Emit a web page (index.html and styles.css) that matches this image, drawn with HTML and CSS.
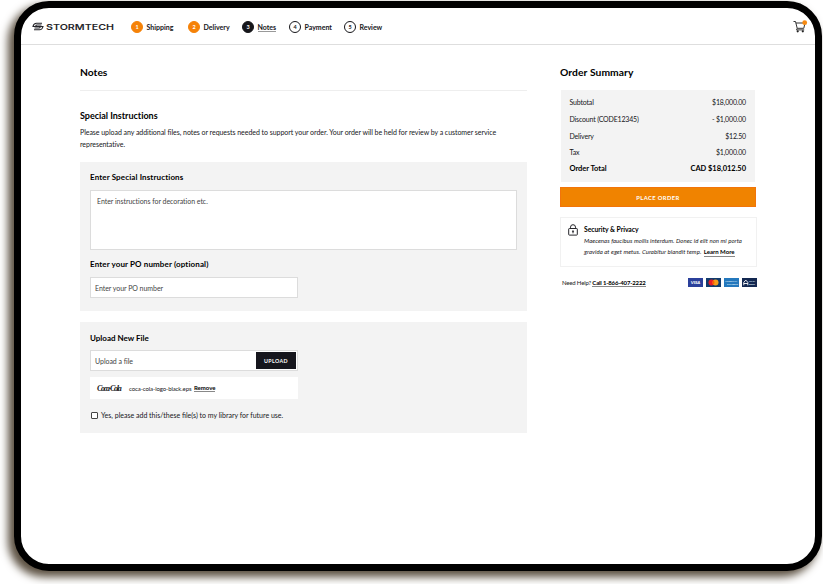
FILE: index.html
```
<!DOCTYPE html>
<html lang="en">
<head>
  <meta charset="UTF-8" />
  <meta name="viewport" content="width=device-width,initial-scale=1.0" />
  <title>Stormtech Checkout - Notes</title>
  <link rel="stylesheet" href="styles.css">
</head>
<body>

  <div class="device">

    <header class="header">
      <div class="logo">
        <svg width="12" height="9" viewBox="0 0 24 18" fill="none" stroke="#25252a" stroke-width="2.300">
          <path d="M20 2.500H9C5 2.500 3 4.500 2 9h12c3 0 3 3 0 3H5" />
          <path d="M4 15.500h11c4 0 6-2 7-6.500H10c-3 0-3-3 0-3h9" />
        </svg>
        <svg class="logo_text" width="69" height="10" viewBox="0 0 69 10">
          <text x="0" y="7.800" textLength="68" lengthAdjust="spacingAndGlyphs">STORMTECH</text>
        </svg>
      </div>

      <nav class="steps">
        <a class="step done"><span class="num">1</span><span class="name">Shipping</span></a>
        <a class="step done"><span class="num">2</span><span class="name">Delivery</span></a>
        <a class="step current"><span class="num">3</span><span class="name">Notes</span></a>
        <a class="step"><span class="num">4</span><span class="name">Payment</span></a>
        <a class="step"><span class="num">5</span><span class="name">Review</span></a>
      </nav>

      <svg class="cart" width="15" height="13" viewBox="0 0 15 13">
        <g fill="none" stroke="#333" stroke-width="1">
          <path d="M0.500 1.500h2l1.700 6.800h6.600l1.200-5.300H3" />
          <path d="M4.200 8.300l-.7 1.600h7.700" />
        </g>
        <circle cx="4.700" cy="11.300" r="1.100" fill="#222" />
        <circle cx="9.800" cy="11.300" r="1.100" fill="#222" />
        <circle cx="11.700" cy="2.700" r="2.400" fill="#f78a10" />
      </svg>
    </header>

    <main class="main">

      <section class="notes">
        <h1>Notes</h1>

        <h2>Special Instructions</h2>
        <p class="intro">Please upload any additional files, notes or requests needed to support your order. Your order will be held for review by a customer service<br>representative.</p>

        <div class="panel">
          <h3>Enter Special Instructions</h3>
          <div class="textarea">Enter instructions for decoration etc.</div>
          <h3 class="po_label">Enter your PO number (optional)</h3>
          <div class="field">Enter your PO number</div>
        </div>

        <div class="panel upload">
          <h3>Upload New File</h3>
          <div class="field">Upload a file<button>UPLOAD</button></div>
          <div class="file">
            <span class="cola">Coca&#8209;Cola</span>
            <span class="file_name">coca-cola-logo-black.eps</span>
            <a class="link">Remove</a>
          </div>
          <div class="library"><span class="checkbox"></span><span>Yes, please add this/these file(s) to my library for future use.</span></div>
        </div>
      </section>

      <aside class="order">
        <h1>Order Summary</h1>

        <div class="summary">
          <div class="row"><span>Subtotal</span><span>$18,000.00</span></div>
          <div class="row"><span>Discount (CODE12345)</span><span>- $1,000.00</span></div>
          <div class="row"><span>Delivery</span><span>$12.50</span></div>
          <div class="row"><span>Tax</span><span>$1,000.00</span></div>
          <div class="row total"><span>Order Total</span><span>CAD $18,012.50</span></div>
        </div>

        <button class="place">PLACE ORDER</button>

        <div class="security">
          <svg width="10" height="12" viewBox="0 0 10 12" fill="none" stroke="#25252a" stroke-width="1">
            <path d="M2.500 4.500V3.200a2.500 2.500 0 0 1 5 0v1.300" />
            <rect x="0.700" y="4.500" width="8.600" height="6.600" rx="0.600" />
            <path d="M5 7.500v1.800" />
            <circle cx="5" cy="7.200" r="0.500" fill="#25252a" />
          </svg>
          <div>
            <h4>Security &amp; Privacy</h4>
            <p>Maecenas faucibus mollis interdum. Donec id elit non mi porta<br>gravida at eget metus. Curabitur blandit temp. <a class="link">Learn More</a></p>
          </div>
        </div>

        <div class="help">
          <span class="help_text">Need Help? <a class="link">Call 1-866-407-2222</a></span>
          <span class="cards">
            <svg width="15" height="9" viewBox="0 0 15 9">
              <rect width="15" height="9" fill="#2b409b" />
              <text class="visa" x="7.500" y="6.200">VISA</text>
            </svg>
            <svg width="15" height="9" viewBox="0 0 15 9">
              <rect width="15" height="9" fill="#123b6d" />
              <circle cx="5.500" cy="4.500" r="3" fill="#eb1c26" />
              <circle cx="9.500" cy="4.500" r="3" fill="#f79e1b" />
              <path d="M7.500 2.260a3 3 0 0 1 0 4.480a3 3 0 0 1 0-4.480z" fill="#ff5f00" />
            </svg>
            <svg width="15" height="9" viewBox="0 0 15 9">
              <rect width="15" height="9" fill="#2478bd" />
              <text class="amex" x="1" y="4.300" textLength="12" lengthAdjust="spacingAndGlyphs">AMERICAN</text>
              <text class="amex" x="3" y="7.300" textLength="11" lengthAdjust="spacingAndGlyphs">EXPRESS</text>
            </svg>
            <svg width="15" height="9" viewBox="0 0 15 9">
              <rect width="15" height="9" fill="#122750" />
              <path d="M1.800 7.300v-3l2-2.200 2 2.200v3M1.800 5.500h4" fill="none" stroke="#fff" stroke-width="0.900" />
              <text class="amex" x="7" y="4.300" textLength="6" lengthAdjust="spacingAndGlyphs">Pay by</text>
              <text class="amex" x="7" y="7.200" textLength="6" lengthAdjust="spacingAndGlyphs">Bank</text>
            </svg>
          </span>
        </div>
      </aside>

    </main>
  </div>

</body>
</html>
```
FILE: styles.css
```
* {
  box-sizing: border-box;
}

body {
  margin: 0;
  height: 584px;
  padding: 1px 0 0 14px;
  overflow: hidden;
  background: #fff;
  color: #16161a;
  font-family: Lato, "Liberation Sans", sans-serif;
  font-size: 7px;
}

h1, h2, h3, h4, p {
  margin: 0;
}

h1, h2, h3, h4 {
  color: #000;
  font-weight: 700;
}

button {
  border: none;
  padding: 0;
  color: #fff;
  font-family: inherit;
  font-weight: 700;
}

.device {
  width: 808px;
  height: 570px;
  border: 7px solid #000;
  border-radius: 35px;
  background: #fff;
  box-shadow: -5px 5px 9px 1px #5c5142;
}

/* ========================== */
/* Header */
/* ========================== */

.header {
  display: flex;
  align-items: center;
  height: 37px;
  padding: 1px 7px 0 11px;
  border-bottom: 1px solid #dedede;
}

.logo {
  display: flex;
  align-items: center;
  gap: 2px;
  width: 99px;
}

.logo_text text {
  font-family: Inter, sans-serif;
  font-size: 7.8px;
  font-weight: 600;
  fill: #25252a;
}

.steps {
  display: grid;
  grid-template-columns: 57px 54px 47px 55px auto;
}

.step {
  display: flex;
  align-items: center;
  gap: 3.5px;
  font-weight: 700;
  line-height: 8px;
}

.num {
  width: 12px;
  height: 12px;
  border: 1px solid #16161a;
  border-radius: 50%;
  font-size: 5.5px;
  line-height: 10px;
  text-align: center;
}

.done .num {
  border-color: #f58208;
  background: #f58208;
  color: #fff;
}

.current .num {
  background: #16161a;
  color: #fff;
}

.current .name {
  box-shadow: 0 1px #999;
}

.cart {
  margin-left: auto;
}

/* ========================== */
/* Notes */
/* ========================== */

.main {
  display: flex;
  justify-content: space-between;
  padding: 18px 58px 0 59px;
}

.notes {
  width: 447px;
}

.notes h1, .order h1 {
  height: 27px;
  font-size: 10.3px;
  line-height: 18px;
}

.notes h1 {
  height: 28px;
  border-bottom: 1px solid #eee;
}

.order h1 {
  letter-spacing: 0.08px;
}

.notes h2 {
  margin-top: 19px;
  font-size: 9px;
  letter-spacing: -0.02px;
  line-height: 12px;
}

.intro {
  margin-top: 4px;
  letter-spacing: -0.043px;
  line-height: 12px;
  white-space: nowrap;
}

.panel {
  height: 149px;
  margin-top: 12px;
  padding: 9px 10px;
  background: #f3f3f3;
}

.panel h3 {
  font-size: 8px;
  letter-spacing: 0.12px;
  line-height: 12px;
}

.textarea {
  height: 60px;
  margin-top: 7px;
  padding: 4px 6px;
  border: 1px solid #dcdcdc;
  background: #fff;
  color: #444;
  letter-spacing: -0.04px;
  line-height: 12px;
}

.panel .po_label {
  margin-top: 8px;
}

.field {
  display: flex;
  align-items: center;
  justify-content: space-between;
  width: 208px;
  height: 21px;
  margin-top: 7px;
  padding: 0 1px 0 4px;
  border: 1px solid #dcdcdc;
  background: #fff;
  color: #444;
  letter-spacing: -0.04px;
}

.upload {
  height: 111px;
  margin-top: 11px;
  padding-top: 10px;
}

.upload h3 {
  letter-spacing: 0;
}

.upload .field {
  margin-top: 6px;
}

.field button {
  width: 40px;
  height: 17px;
  background: #16161d;
  font-size: 5.3px;
  letter-spacing: 0.4px;
}

.file {
  display: flex;
  align-items: center;
  width: 208px;
  height: 22px;
  margin-top: 6px;
  padding-left: 7px;
  background: #fff;
  font-size: 6px;
}

.cola {
  width: 32px;
  font-family: "Liberation Serif", serif;
  font-size: 8px;
  font-style: italic;
  font-weight: 700;
  letter-spacing: -1.3px;
}

.file_name {
  margin-right: 2.5px;
  letter-spacing: -0.1px;
}

.link {
  border-bottom: 1px solid #888;
  color: #000;
  font-style: normal;
  font-weight: 700;
}

.library {
  display: flex;
  align-items: center;
  gap: 3px;
  height: 10px;
  margin: 11px 0 0 1px;
}

.checkbox {
  width: 7px;
  height: 7px;
  border: 1px solid #444;
  border-radius: 1px;
  background: #fff;
}

/* ========================== */
/* Order summary */
/* ========================== */

.order {
  width: 197px;
}

.summary {
  width: 194px;
  height: 92px;
  margin-left: 1px;
  padding: 4px 9px 0 8.5px;
  background: #f3f3f3;
}

.row {
  display: flex;
  justify-content: space-between;
  letter-spacing: -0.18px;
  line-height: 16.8px;
}

.total {
  color: #000;
  font-size: 7.5px;
  font-weight: 700;
  letter-spacing: -0.04px;
}

.place {
  display: block;
  width: 196px;
  height: 20px;
  margin-top: 5px;
  border: 1px solid #f2740a;
  background: #f08300;
  font-size: 5.8px;
  letter-spacing: 0.4px;
}

.security {
  display: flex;
  gap: 6px;
  height: 50px;
  margin-top: 10px;
  padding: 5px 7px;
  border: 1px solid #f1f1f1;
}

.security svg {
  margin-top: 1px;
}

.security h4 {
  font-size: 6.8px;
  letter-spacing: -0.03px;
  line-height: 13px;
}

.security p {
  font-size: 6px;
  font-style: italic;
  letter-spacing: 0.06px;
  line-height: 10.5px;
  white-space: nowrap;
}

.security .link {
  display: inline-block;
  margin: 1px 0 0 1px;
  letter-spacing: 0;
  line-height: 8px;
}

.help {
  display: flex;
  align-items: center;
  justify-content: space-between;
  height: 10px;
  margin-top: 10px;
  padding-left: 2px;
  font-size: 6px;
}

.help_text {
  letter-spacing: -0.17px;
}

.cards {
  display: flex;
  gap: 3px;
}

.visa {
  fill: #fff;
  font-size: 4.5px;
  font-style: italic;
  font-weight: 900;
  text-anchor: middle;
}

.amex {
  fill: #dcebf7;
  font-size: 2.6px;
  font-weight: 700;
}
```
